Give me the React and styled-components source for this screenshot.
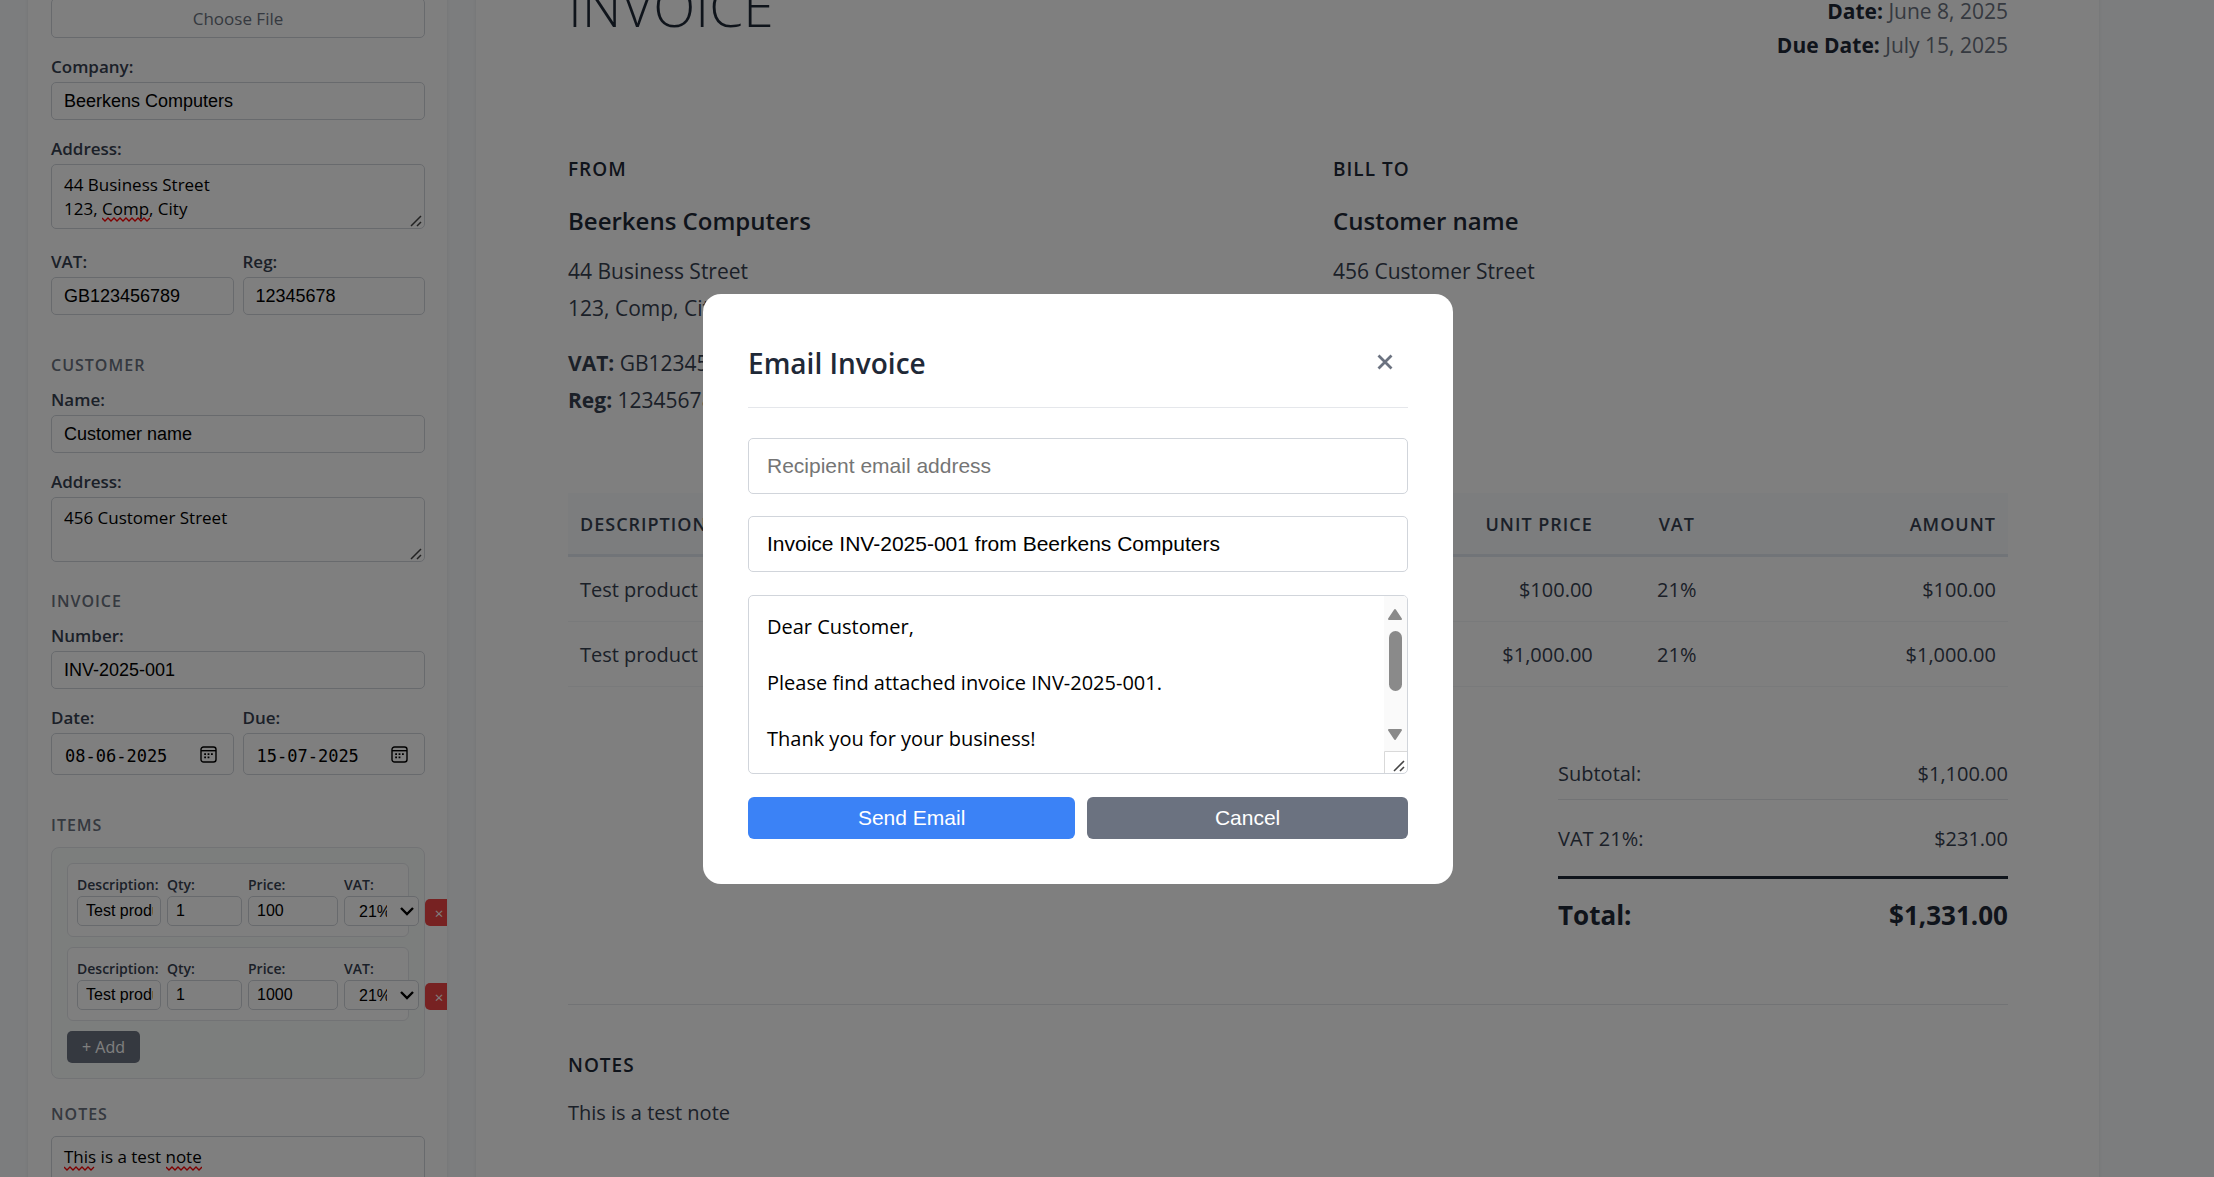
import React from "react";
import styled, { createGlobalStyle } from "styled-components";

const sans = `"Open Sans", "Noto Sans", sans-serif`;
const arial = `"Liberation Sans", Arial, sans-serif`;

const GlobalStyle = createGlobalStyle`
  * {
    box-sizing: border-box;
  }
  body {
    margin: 0;
    background: #f8fafc;
    font-family: ${sans};
    color: #374151;
  }
  input, textarea, select, button {
    margin: 0;
    outline: none;
  }
`;

const Viewport = styled.div`
  height: 100vh;
  overflow: hidden;
`;

/* page is scrolled down a little behind the dialog */
const Page = styled.div`
  display: flex;
  align-items: stretch;
  gap: 29px;
  min-height: 120vh;
  margin-top: -60px;
  padding: 0 115px 0 28px;
`;

const Sidebar = styled.aside`
  flex: 0 0 419px;
  padding: 58px 22px 40px 23px;
  background: #fff;
  overflow: hidden;
  box-shadow: 0 1px 4px rgba(0, 0, 0, 0.08);
`;

const Section = styled.section`
  display: flex;
  flex-direction: column;
  gap: 19px;
  margin-bottom: 25px;
`;

const SectionTitle = styled.h3`
  margin: 0 0 ${(p) => (p.$tight ? "-7px" : "-4px")};
  font-size: 16px;
  line-height: 20px;
  font-weight: 600;
  letter-spacing: 1px;
  text-transform: uppercase;
  color: #6b7280;
`;

const UploadButton = styled.button`
  height: 40px;
  padding: 0;
  border: 1px solid #d1d5db;
  border-radius: 5px;
  background: #fff;
  font: 17px ${sans};
  color: #6b7280;
`;

const Field = styled.div`
  display: flex;
  flex-direction: column;
  gap: 5px;
  min-width: 0;
`;

const FieldRow = styled.div`
  display: grid;
  grid-template-columns: 1fr 1fr;
  gap: 9px;
  margin-bottom: 15px;
`;

const Label = styled.label`
  font-size: 17px;
  line-height: 20px;
  font-weight: 600;
  color: #374151;
`;

const TextInput = styled.input`
  width: 100%;
  height: 38px;
  padding: 0 12px;
  border: 1px solid #d1d5db;
  border-radius: 5px;
  background: #fff;
  font: 18px ${arial};
  color: #000;
`;

const AreaWrap = styled.div`
  position: relative;
  margin-bottom: 4px;
`;

const TextArea = styled.textarea`
  display: block;
  width: 100%;
  height: 65px;
  padding: 8px 12px;
  border: 1px solid #d1d5db;
  border-radius: 5px;
  background: #fff;
  font: 17px/24px ${sans};
  color: #000;
  resize: none;
  overflow: hidden;
`;

const Grip = styled.svg`
  position: absolute;
  right: 3px;
  bottom: 2px;
`;

const Squiggle = styled.svg`
  position: absolute;
  left: ${(p) => p.$left}px;
  top: ${(p) => p.$top}px;
`;

const DateBox = styled.div`
  display: flex;
  align-items: center;
  height: 42px;
  padding: 0 16px 0 13px;
  border: 1px solid #d1d5db;
  border-radius: 5px;
`;

const DateInput = styled.input`
  flex: 1;
  min-width: 0;
  padding: 3px 0 0;
  border: 0;
  background: none;
  font: 17px "DejaVu Sans Mono", monospace;
  color: #000;
`;

const IconButton = styled.button`
  display: flex;
  padding: 0;
  border: 0;
  background: none;
`;

const ItemsBox = styled.div`
  display: flex;
  flex-direction: column;
  align-items: stretch;
  gap: 10px;
  padding: 15px;
  border: 1px solid #e5e7eb;
  border-radius: 8px;
  background: #f9fcfb;
`;

const Item = styled.div`
  display: grid;
  grid-template-columns: 84px 75px 90px 75px 28px;
  gap: 6px;
  align-items: end;
  padding: 11px 9px 10px;
  border: 1px solid #e5e7eb;
  border-radius: 6px;
  background: #fff;
`;

const ItemField = styled.div`
  position: relative;
  display: flex;
  flex-direction: column;
  gap: 1px;
`;

const ItemLabel = styled.label`
  font-size: 14px;
  line-height: 20px;
  font-weight: 600;
  white-space: nowrap;
`;

const ItemInput = styled.input`
  width: 100%;
  height: 30px;
  padding: 0 7px 0 8px;
  border: 1px solid #d1d5db;
  border-radius: 5px;
  background: #fff;
  font: 16px ${arial};
  color: #000;
`;

const ItemSelect = styled.select`
  width: 100%;
  height: 30px;
  padding: 0 31px 0 14px;
  border: 1px solid #d1d5db;
  border-radius: 5px;
  background: #fff;
  appearance: none;
  font: 16px ${arial};
  color: #000;
  text-overflow: clip;
`;

const Chevron = styled.svg`
  position: absolute;
  right: 5px;
  bottom: 9px;
  pointer-events: none;
`;

const DeleteButton = styled.button`
  height: 27px;
  padding: 0;
  border: 0;
  border-radius: 5px;
  background: #ef4444;
  font: 15px ${sans};
  color: #fff;
`;

const AddButton = styled.button`
  align-self: flex-start;
  width: 73px;
  height: 32px;
  padding: 0;
  border: 0;
  border-radius: 5px;
  background: #6b7280;
  font: 16px ${sans};
  color: #fff;
`;

const Paper = styled.main`
  flex: 1;
  padding: 36px 91px 90px 92px;
  background: #fff;
  box-shadow: 0 1px 4px rgba(0, 0, 0, 0.08);
`;

const InvoiceHeader = styled.header`
  display: flex;
  justify-content: space-between;
  margin-bottom: 93px;
`;

const InvoiceTitle = styled.h1`
  margin: 0;
  font-size: 55px;
  line-height: 60px;
  font-weight: 300;
  color: #1f2937;
`;

const Dates = styled.div`
  padding-top: 18px;
  text-align: right;
  font-size: 21px;
  line-height: 34px;
  color: #6b7280;

  strong {
    color: #1f2937;
  }
`;

const Parties = styled.div`
  display: grid;
  grid-template-columns: 1fr 1fr;
  gap: 90px;
  margin-bottom: 74px;
`;

const Caption = styled.h2`
  margin: 0;
  font-size: 19px;
  line-height: 28px;
  font-weight: 600;
  letter-spacing: 1px;
  text-transform: uppercase;
  color: #1f2937;
`;

const PartyName = styled.p`
  margin: 20px 0 14px;
  font-size: 24px;
  line-height: 36px;
  font-weight: 600;
  color: #1f2937;
`;

const PartyText = styled.p`
  margin: 0 0 18px;
  font-size: 21px;
  line-height: 37px;
  white-space: pre-line;

  &:last-child {
    margin: 0;
  }
`;

const Table = styled.table`
  width: 100%;
  border-collapse: separate;
  border-spacing: 0;
  table-layout: fixed;
  font-size: 20px;
`;

const Th = styled.th`
  width: ${(p) => p.$width};
  height: 64px;
  padding: 0 12px;
  border-bottom: 3px solid #e2e8f0;
  background: #f8fafc;
  font-size: 18px;
  font-weight: 600;
  letter-spacing: 1px;
  text-align: ${(p) => p.$align || "left"};
  text-transform: uppercase;
`;

const Td = styled.td`
  height: 65px;
  padding: 0 12px;
  border-bottom: 1px solid #f3f4f6;
  text-align: ${(p) => p.$align || "left"};
`;

const Totals = styled.div`
  width: 450px;
  margin: 69px 0 69px auto;
`;

const TotalRow = styled.div`
  display: flex;
  justify-content: space-between;
  padding: ${(p) => (p.$last ? "21px 0 19px" : "0 0 7px")};
  border-bottom: ${(p) => (p.$last ? "0" : "1px solid #e5e7eb")};
  font-size: 20px;
  line-height: 36px;
`;

const GrandTotal = styled.div`
  display: flex;
  justify-content: space-between;
  padding-top: 16px;
  border-top: 3px solid #1f2937;
  font-size: 26px;
  line-height: 40px;
  font-weight: 700;
  color: #1f2937;
`;

const Notes = styled.footer`
  padding-top: 46px;
  border-top: 1px solid #e5e7eb;

  p {
    margin: 16px 0 0;
    font-size: 20px;
    line-height: 36px;
  }
`;

const Overlay = styled.div`
  position: fixed;
  inset: 0;
  display: flex;
  align-items: center;
  justify-content: center;
  padding-right: 58px;
  background: rgba(0, 0, 0, 0.5);
`;

const Dialog = styled.form`
  width: 750px;
  max-width: 90%;
  padding: 45px;
  border-radius: 18px;
  background: #fff;
`;

const DialogHeader = styled.div`
  display: flex;
  align-items: flex-start;
  justify-content: space-between;
  height: 69px;
  margin-bottom: 30px;
  border-bottom: 1px solid #e5e7eb;

  h2 {
    margin: 0;
    font-size: 28px;
    line-height: 48px;
    font-weight: 600;
    color: #1f2937;
  }
`;

const CloseButton = styled.button`
  display: flex;
  padding: 15px;
  border: 0;
  background: none;
`;

const DialogInput = styled(TextInput)`
  display: block;
  height: 56px;
  margin-bottom: 22px;
  padding: 0 18px;
  font-size: 21px;

  &::placeholder {
    color: #757575;
  }
`;

const MessageWrap = styled(AreaWrap)`
  margin: 23px 0;
`;

const Message = styled(TextArea)`
  height: 179px;
  padding: 17px 40px 17px 18px;
  font-size: 20px;
  line-height: 28px;
`;

const ScrollBar = styled.svg`
  position: absolute;
  top: 1px;
  right: 1px;
`;

const Actions = styled.div`
  display: grid;
  grid-template-columns: 51fr 50fr;
  gap: 12px;
`;

const ActionButton = styled.button`
  height: 42px;
  padding: 0;
  border: 0;
  border-radius: 6px;
  background: ${(p) => (p.$primary ? "#3b82f6" : "#6b7280")};
  font: 21px ${arial};
  color: #fff;
`;

const items = [
  { id: 1, description: "Test product", qty: "1", price: "100", vat: "21%", unit: "$100.00", amount: "$100.00" },
  { id: 2, description: "Test product", qty: "1", price: "1000", vat: "21%", unit: "$1,000.00", amount: "$1,000.00" },
];

function ResizeGrip() {
  return (
    <Grip width="12" height="12" viewBox="0 0 12 12" stroke="#444" strokeWidth="1.5" aria-hidden="true">
      <path d="M1 11L11 1M7 11L11 7" />
    </Grip>
  );
}

function Misspelled({ left, top, width }) {
  let d = "M0 1";
  for (let x = 3; x <= width; x += 3) {
    d += `L${x} ${x % 2 ? 4 : 1}`;
  }
  return (
    <Squiggle $left={left} $top={top} width={width} height="5" fill="none" stroke="#f00" strokeWidth="1.3" aria-hidden="true">
      <path d={d} />
    </Squiggle>
  );
}

function TextField({ id, label, value }) {
  return (
    <Field>
      <Label htmlFor={id}>{label}</Label>
      <TextInput id={id} defaultValue={value} />
    </Field>
  );
}

function AreaField({ id, label, value, children }) {
  return (
    <Field>
      <Label htmlFor={id}>{label}</Label>
      <AreaWrap>
        <TextArea id={id} defaultValue={value} spellCheck={false} />
        {children}
        <ResizeGrip />
      </AreaWrap>
    </Field>
  );
}

function DateField({ id, label, value }) {
  return (
    <Field>
      <Label htmlFor={id}>{label}</Label>
      <DateBox>
        <DateInput id={id} defaultValue={value} />
        <IconButton type="button" aria-label="Open calendar">
          <svg width="17" height="17" viewBox="0 0 17 17" fill="none" stroke="#000" strokeWidth="1.4">
            <rect x="1" y="1" width="15" height="15" rx="2.5" />
            <path d="M1 4.7H16" />
            <path d="M7.6 8.2H9.4M11 8.2H12.8M4.2 11.4H6M7.6 11.4H9.4M4.2 8.2H6" strokeWidth="1.8" />
          </svg>
        </IconButton>
      </DateBox>
    </Field>
  );
}

function ItemEditor({ item }) {
  const id = "item" + item.id;
  return (
    <Item>
      <ItemField>
        <ItemLabel htmlFor={id + "desc"}>Description:</ItemLabel>
        <ItemInput id={id + "desc"} defaultValue={item.description} />
      </ItemField>
      <ItemField>
        <ItemLabel htmlFor={id + "qty"}>Qty:</ItemLabel>
        <ItemInput id={id + "qty"} defaultValue={item.qty} />
      </ItemField>
      <ItemField>
        <ItemLabel htmlFor={id + "price"}>Price:</ItemLabel>
        <ItemInput id={id + "price"} defaultValue={item.price} />
      </ItemField>
      <ItemField>
        <ItemLabel htmlFor={id + "vat"}>VAT:</ItemLabel>
        <ItemSelect id={id + "vat"} defaultValue={item.vat}>
          <option>{item.vat}</option>
        </ItemSelect>
        <Chevron width="14" height="12" viewBox="0 0 14 12" fill="none" stroke="#000" strokeWidth="2.4">
          <path d="M1 3L7 9L13 3" />
        </Chevron>
      </ItemField>
      <DeleteButton type="button" aria-label="Remove item">×</DeleteButton>
    </Item>
  );
}

function Editor() {
  return (
    <Sidebar>
      <Section>
        <UploadButton type="button">Choose File</UploadButton>
        <TextField id="company" label="Company:" value="Beerkens Computers" />
        <AreaField id="address" label="Address:" value={"44 Business Street\n123, Comp, City"}>
          <Misspelled left={51} top={53} width={48} />
        </AreaField>
        <FieldRow>
          <TextField id="vat" label="VAT:" value="GB123456789" />
          <TextField id="reg" label="Reg:" value="12345678" />
        </FieldRow>
      </Section>
      <Section>
        <SectionTitle>Customer</SectionTitle>
        <TextField id="customer" label="Name:" value="Customer name" />
        <AreaField id="customerAddress" label="Address:" value="456 Customer Street" />
      </Section>
      <Section>
        <SectionTitle>Invoice</SectionTitle>
        <TextField id="number" label="Number:" value="INV-2025-001" />
        <FieldRow>
          <DateField id="date" label="Date:" value="08-06-2025" />
          <DateField id="due" label="Due:" value="15-07-2025" />
        </FieldRow>
      </Section>
      <Section>
        <SectionTitle $tight>Items</SectionTitle>
        <ItemsBox>
          {items.map((item) => (
            <ItemEditor key={item.id} item={item} />
          ))}
          <AddButton type="button">+ Add</AddButton>
        </ItemsBox>
      </Section>
      <Section>
        <SectionTitle $tight>Notes</SectionTitle>
        <AreaWrap>
          <TextArea aria-label="Notes" defaultValue="This is a test note" spellCheck={false} />
          <Misspelled left={13} top={30} width={31} />
          <Misspelled left={115} top={30} width={36} />
          <ResizeGrip />
        </AreaWrap>
      </Section>
    </Sidebar>
  );
}

function Invoice() {
  return (
    <Paper>
      <InvoiceHeader>
        <InvoiceTitle>INVOICE</InvoiceTitle>
        <Dates>
          <div><strong>Date:</strong> June 8, 2025</div>
          <div><strong>Due Date:</strong> July 15, 2025</div>
        </Dates>
      </InvoiceHeader>
      <Parties>
        <div>
          <Caption>From</Caption>
          <PartyName>Beerkens Computers</PartyName>
          <PartyText>{"44 Business Street\n123, Comp, City"}</PartyText>
          <PartyText>
            <strong>VAT:</strong> GB123456789
            <br />
            <strong>Reg:</strong> 12345678
          </PartyText>
        </div>
        <div>
          <Caption>Bill To</Caption>
          <PartyName>Customer name</PartyName>
          <PartyText>456 Customer Street</PartyText>
        </div>
      </Parties>
      <Table>
        <thead>
          <tr>
            <Th $width="45%">Description</Th>
            <Th $width="12%" $align="center">Qty</Th>
            <Th $width="15%" $align="right">Unit Price</Th>
            <Th $width="10%" $align="center">VAT</Th>
            <Th $width="18%" $align="right">Amount</Th>
          </tr>
        </thead>
        <tbody>
          {items.map((item) => (
            <tr key={item.id}>
              <Td>{item.description}</Td>
              <Td $align="center">{item.qty}</Td>
              <Td $align="right">{item.unit}</Td>
              <Td $align="center">{item.vat}</Td>
              <Td $align="right">{item.amount}</Td>
            </tr>
          ))}
        </tbody>
      </Table>
      <Totals>
        <TotalRow><span>Subtotal:</span><span>$1,100.00</span></TotalRow>
        <TotalRow $last><span>VAT 21%:</span><span>$231.00</span></TotalRow>
        <GrandTotal><span>Total:</span><span>$1,331.00</span></GrandTotal>
      </Totals>
      <Notes>
        <Caption>Notes</Caption>
        <p>This is a test note</p>
      </Notes>
    </Paper>
  );
}

function EmailDialog() {
  return (
    <Overlay>
      <Dialog role="dialog" aria-label="Email Invoice">
        <DialogHeader>
          <h2>Email Invoice</h2>
          <CloseButton type="button" aria-label="Close">
            <svg width="16" height="16" viewBox="0 0 16 16" stroke="#6b7280" strokeWidth="2.8">
              <path d="M1.5 1.5L14.5 14.5M14.5 1.5L1.5 14.5" />
            </svg>
          </CloseButton>
        </DialogHeader>
        <DialogInput type="email" aria-label="Recipient" placeholder="Recipient email address" />
        <DialogInput aria-label="Subject" defaultValue="Invoice INV-2025-001 from Beerkens Computers" />
        <MessageWrap>
          <Message
            aria-label="Message"
            spellCheck={false}
            defaultValue={"Dear Customer,\n\nPlease find attached invoice INV-2025-001.\n\nThank you for your business!"}
          />
          <ScrollBar width="23" height="177" viewBox="0 0 23 177" aria-hidden="true">
            <path d="M0 0H19Q23 0 23 4V155H0Z" fill="#fafafa" />
            <path d="M11 14L17 23H5Z" fill="#8a8a8a" stroke="#8a8a8a" strokeWidth="2" strokeLinejoin="round" />
            <rect x="5" y="35" width="13" height="60" rx="6.5" fill="#8a8a8a" />
            <path d="M11 143L17 134H5Z" fill="#8a8a8a" stroke="#8a8a8a" strokeWidth="2" strokeLinejoin="round" />
            <path d="M0.5 177V155.5H23" fill="none" stroke="#d9d9d9" />
            <path d="M10 175L20 165M16 175L20 171" fill="none" stroke="#444" strokeWidth="1.6" />
          </ScrollBar>
        </MessageWrap>
        <Actions>
          <ActionButton type="button" $primary>Send Email</ActionButton>
          <ActionButton type="button">Cancel</ActionButton>
        </Actions>
      </Dialog>
    </Overlay>
  );
}

export default function App() {
  return (
    <>
      <GlobalStyle />
      <Viewport>
        <Page>
          <Editor />
          <Invoice />
        </Page>
      </Viewport>
      <EmailDialog />
    </>
  );
}
